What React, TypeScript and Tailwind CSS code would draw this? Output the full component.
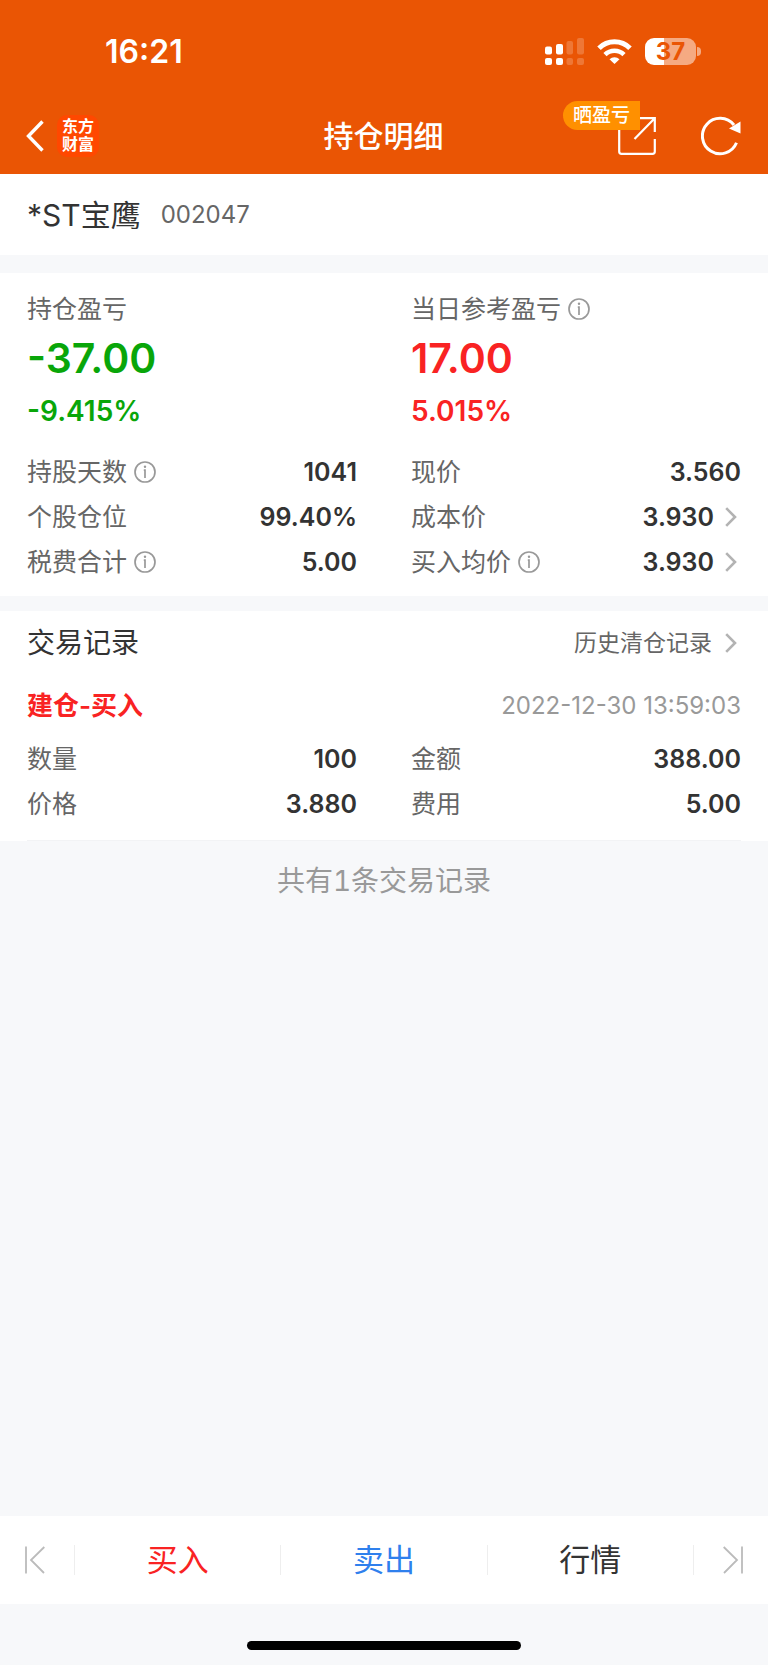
import type { ReactNode } from "react";

const InfoIcon = () => (
  <svg className="h-[22px] w-[22px] shrink-0 text-[#999]" viewBox="0 0 22 22" fill="none" stroke="currentColor">
    <circle cx="11" cy="11" r="10" strokeWidth="1.7" />
    <path d="M9.800 9.200H11V17" strokeWidth="1.7" />
    <circle cx="11" cy="5.800" r="1.200" fill="currentColor" stroke="none" />
  </svg>
);

const ArrowIcon = () => (
  <svg className="h-5 w-3 shrink-0 text-[#b3b3b3]" viewBox="0 0 12 20" fill="none" stroke="currentColor" strokeWidth="2.6">
    <path d="M1.2 1.2 10 10 1.2 18.8" />
  </svg>
);

const StatusBar = () => (
  <div className="flex h-[98px] items-center justify-between pt-[6px] pr-[67px] pl-[105px]">
    <span className="text-[32px] leading-10 font-semibold">16:21</span>
    <div className="flex items-center gap-[13px] pb-[2px]">
      <svg className="h-[27px] w-[39px]" viewBox="0 0 39 27" fill="currentColor">
        <rect x="0" y="8.5" width="7" height="8" rx="2" />
        <rect x="11" y="6" width="7" height="10.5" rx="2" />
        <rect x="0" y="20" width="7" height="7" rx="2" />
        <rect x="11" y="20" width="7" height="7" rx="2" />
        <g opacity=".2">
          <rect x="21.5" y="3" width="6.5" height="13.5" rx="2" />
          <rect x="32" y="0" width="7" height="16.5" rx="2" />
          <rect x="21.5" y="20" width="6.5" height="7" rx="2" />
          <rect x="32" y="20" width="7" height="7" rx="2" />
        </g>
      </svg>
      <svg className="h-[25px] w-[35px]" viewBox="0 0 35 25" fill="none" stroke="currentColor">
        <path d="M2 9.2A22 22 0 0 1 33 9.2" strokeWidth="5" />
        <path d="M8 15.6a13.5 13.5 0 0 1 19 0" strokeWidth="4.6" />
        <path d="M12.5 20.2a7.2 7.2 0 0 1 10 0L17.5 25z" fill="currentColor" stroke="none" />
      </svg>
      <div className="flex items-center gap-px">
        <div className="flex h-[27px] w-[51px] items-center justify-center rounded-[9px] bg-[linear-gradient(90deg,#fff_37%,#f5aa82_37%)] text-2xl leading-[29px] font-bold text-[#ea5504]">
          37
        </div>
        <div className="h-[9px] w-1 rounded-r-full bg-[#f5aa82]" />
      </div>
    </div>
  </div>
);

const NavBar = () => (
  <div className="flex h-[76px] items-center justify-between pr-[27px] pl-[26px]">
    <div className="flex flex-1 items-center gap-[13px]">
      <button type="button" aria-label="返回">
        <svg className="h-8 w-[18px]" viewBox="0 0 18 32" fill="none" stroke="currentColor" strokeWidth="3.4">
          <path d="M16.5 1.5 2.5 16l14 14.5" />
        </svg>
      </button>
      <div className="flex h-[42px] w-[42px] flex-col items-center justify-center rounded-[10px] bg-[#ff4800] pb-[2px] text-base leading-[18px] font-bold">
        <span>东方</span>
        <span>财富</span>
      </div>
    </div>
    <h1 className="text-[30px] leading-9 font-medium">持仓明细</h1>
    <div className="flex flex-1 items-center justify-end gap-[45px]">
      <button type="button" aria-label="分享" className="relative">
        <svg className="h-[38px] w-[38px]" viewBox="0 0 38 38" fill="none" stroke="currentColor" strokeWidth="2.2">
          <path d="M1.2 8v26.500q0 2.300 2.300 2.300h31q2.300 0 2.300-2.300V22" />
          <path d="M22 1.200h14.800V15M36.500 1.500 16.500 22" />
        </svg>
        <span className="absolute right-4 bottom-[25px] flex h-[29px] w-[77px] items-center justify-center rounded-l-full rounded-tr-[10px] bg-[#ff9000] text-[19px] leading-none font-medium whitespace-nowrap">
          晒盈亏
        </span>
      </button>
      <button type="button" aria-label="刷新">
        <svg className="h-10 w-10" viewBox="0 0 40 40" fill="none" stroke="currentColor" strokeWidth="3">
          <path d="M33 9A17.700 17.700 0 1 0 35.500 26.700" />
          <path d="M28 12.500 39.500 5.500v12z" fill="currentColor" stroke="none" />
        </svg>
      </button>
    </div>
  </div>
);

interface RowProps {
  label: string;
  value: string;
  info?: boolean;
  arrow?: boolean;
}

const Row = ({ label, value, info, arrow }: RowProps) => (
  <div className="flex h-[45px] items-center justify-between">
    <dt className="flex items-center gap-[7px] text-[25px] leading-[30px] text-[#666]">
      {label}
      {info && <InfoIcon />}
    </dt>
    <dd className="flex items-center gap-[11px] text-[25px] leading-[30px] font-semibold text-[#333]">
      {value}
      {arrow && (
        <button type="button" aria-label={label} className="pr-1">
          <ArrowIcon />
        </button>
      )}
    </dd>
  </div>
);

interface ProfitProps {
  label: ReactNode;
  amount: string;
  percent: string;
  color: string;
}

const Profit = ({ label, amount, percent, color }: ProfitProps) => (
  <div>
    <div className="flex items-center gap-[7px] text-[25px] leading-[30px] text-[#666]">{label}</div>
    <div className={color}>
      <p className="mt-[10px] text-[41px] leading-[48px] font-semibold">{amount}</p>
      <p className="mt-[11px] text-[28px] leading-9 font-semibold">{percent}</p>
    </div>
  </div>
);

const holdings: RowProps[] = [
  { label: "持股天数", value: "1041", info: true },
  { label: "现价", value: "3.560" },
  { label: "个股仓位", value: "99.40%" },
  { label: "成本价", value: "3.930", arrow: true },
  { label: "税费合计", value: "5.00", info: true },
  { label: "买入均价", value: "3.930", info: true, arrow: true },
];

const trade: RowProps[] = [
  { label: "数量", value: "100" },
  { label: "金额", value: "388.00" },
  { label: "价格", value: "3.880" },
  { label: "费用", value: "5.00" },
];

const BottomBar = () => (
  <nav className="flex h-[88px] items-center bg-white text-[31px]">
    <button type="button" aria-label="上一只" className="w-[74px] pl-[25px] text-[#bbb]">
      <svg className="h-7 w-5" viewBox="0 0 20 28" fill="none" stroke="currentColor" strokeWidth="1.8">
        <path d="M1 .5v27M19.300 1 6 14l13 13" />
      </svg>
    </button>
    <button type="button" className="h-[30px] flex-1 border-l border-[#eee] leading-[28px] text-[#f92323]">
      买入
    </button>
    <button type="button" className="h-[30px] flex-1 border-l border-[#eee] leading-[28px] text-[#2f80ed]">
      卖出
    </button>
    <button type="button" className="h-[30px] flex-1 border-x border-[#eee] leading-[28px] text-[#333]">
      行情
    </button>
    <button type="button" aria-label="下一只" className="flex w-[74px] justify-end pr-[25px] text-[#bbb]">
      <svg className="h-7 w-5" viewBox="0 0 20 28" fill="none" stroke="currentColor" strokeWidth="1.8">
        <path d="M19 .5v27M.7 1 14 14 1 27" />
      </svg>
    </button>
  </nav>
);

export default function App() {
  return (
    <div className="flex min-h-screen flex-col bg-[#f7f8fa] font-['Inter','Noto_Sans_CJK_SC',sans-serif]">
      <header className="bg-[#ea5504] text-white">
        <StatusBar />
        <NavBar />
      </header>

      <main className="flex-1">
        <section className="flex h-[81px] items-center gap-5 bg-white px-[27px]">
          <h2 className="text-[30px] leading-9 text-[#333]">*ST宝鹰</h2>
          <span className="text-2xl text-[#666]">002047</span>
        </section>

        <section className="mt-[18px] bg-white px-[27px] pt-[21px] pb-3">
          <div className="grid grid-cols-2 gap-x-[54px]">
            <Profit label="持仓盈亏" amount="-37.00" percent="-9.415%" color="text-[#09a609]" />
            <Profit
              label={
                <>
                  当日参考盈亏
                  <InfoIcon />
                </>
              }
              amount="17.00"
              percent="5.015%"
              color="text-[#f92323]"
            />
          </div>
          <dl className="mt-5 grid grid-cols-2 gap-x-[54px]">
            {holdings.map((row) => (
              <Row key={row.label} {...row} />
            ))}
          </dl>
        </section>

        <section className="mt-[15px] bg-white px-[27px]">
          <div className="flex h-16 items-center justify-between">
            <h3 className="text-[28px] leading-9 text-[#333]">交易记录</h3>
            <a href="#history" className="flex items-center gap-[13px] pr-1 text-[23px] leading-[30px] text-[#666]">
              历史清仓记录
              <ArrowIcon />
            </a>
          </div>
          <div className="flex h-[61px] items-center justify-between">
            <span className="text-[26px] leading-[30px] font-semibold text-[#f92323]">建仓-买入</span>
            <time className="text-2xl text-[#999]">2022-12-30 13:59:03</time>
          </div>
          <dl className="grid grid-cols-2 gap-x-[54px] border-b border-[#f2f3f5] pb-[14px]">
            {trade.map((row) => (
              <Row key={row.label} {...row} />
            ))}
          </dl>
        </section>

        <p className="mt-[22px] text-center text-[28px] leading-9 text-[#999] tabular-nums">共有1条交易记录</p>
      </main>

      <BottomBar />
      <div className="flex h-[61px] items-end justify-center pb-[15px]">
        <div className="h-[9px] w-[274px] rounded-full bg-black" />
      </div>
    </div>
  );
}
